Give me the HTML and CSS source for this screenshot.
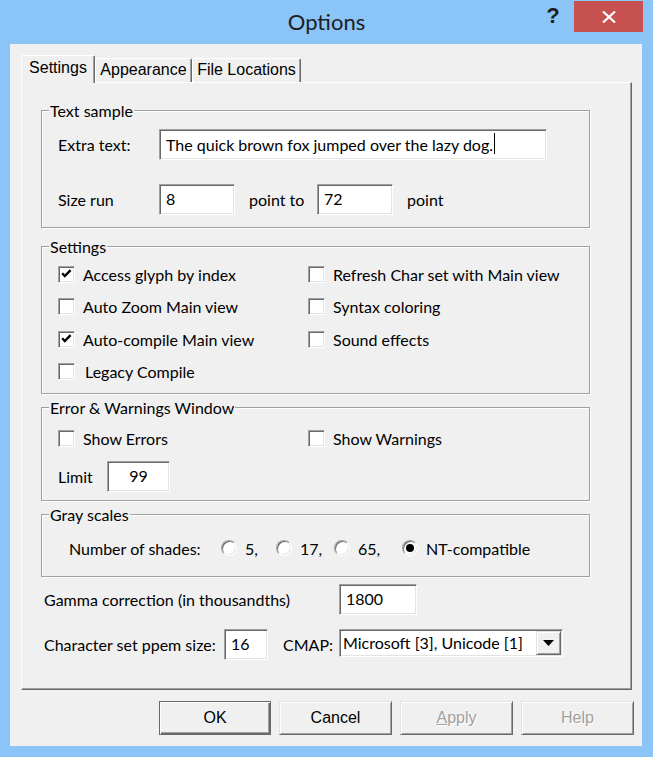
FILE: index.html
```html
<!DOCTYPE html>
<html lang="en">
<head>
<meta charset="utf-8">
<title>Options</title>
<link rel="stylesheet" href="styles.css">
</head>
<body>
<div class="window">
  <header class="titlebar">
    <div class="tb-spacer"></div>
    <div class="title">Options</div>
    <div class="tb-controls">
      <span class="help">?</span>
      <span class="close"><svg width="14" height="12" viewBox="0 0 14 12"><path d="M1 0.5 L13 11.5 M13 0.5 L1 11.5" stroke="#fff" stroke-width="2.2" fill="none"/></svg></span>
    </div>
  </header>
  <main class="client">
    <nav class="tabs">
      <div class="tab active tab-settings">Settings</div>
      <div class="tab tab-appearance">Appearance</div>
      <div class="tab tab-files">File Locations</div>
    </nav>
    <section class="panel">
      <fieldset class="group group-text">
        <legend>Text sample</legend>
        <div class="gbody gbody-text">
          <div class="row">
            <span class="lbl lbl-wide">Extra text:</span>
            <span class="edit edit-long">The quick brown fox jumped over the lazy dog.<span class="caret"></span></span>
          </div>
          <div class="row row-size">
            <span class="lbl lbl-wide">Size run</span>
            <span class="edit edit-size">8</span>
            <span class="unit unit-to">point to</span>
            <span class="edit edit-size">72</span>
            <span class="unit unit-end">point</span>
          </div>
        </div>
      </fieldset>

      <fieldset class="group group-settings">
        <legend>Settings</legend>
        <div class="gbody gbody-settings checks">
          <div class="check"><span class="cb"><svg width="15" height="15" viewBox="0 0 15 15"><path d="M3.2 6.2 L5.8 9 L11.6 3.2" fill="none" stroke="#000" stroke-width="2.4"/></svg></span><span>Access glyph by index</span></div>
          <div class="check"><span class="cb"></span><span>Refresh Char set with Main view</span></div>
          <div class="check"><span class="cb"></span><span>Auto Zoom Main view</span></div>
          <div class="check"><span class="cb"></span><span>Syntax coloring</span></div>
          <div class="check"><span class="cb"><svg width="15" height="15" viewBox="0 0 15 15"><path d="M3.2 6.2 L5.8 9 L11.6 3.2" fill="none" stroke="#000" stroke-width="2.4"/></svg></span><span>Auto-compile Main view</span></div>
          <div class="check"><span class="cb"></span><span>Sound effects</span></div>
          <div class="check"><span class="cb"></span><span class="legacy">Legacy Compile</span></div>
        </div>
      </fieldset>

      <fieldset class="group group-error">
        <legend>Error &amp; Warnings Window</legend>
        <div class="gbody gbody-error">
          <div class="checks">
            <div class="check"><span class="cb"></span><span>Show Errors</span></div>
            <div class="check"><span class="cb"></span><span>Show Warnings</span></div>
          </div>
          <div class="row row-limit">
            <span class="lbl lbl-limit">Limit</span>
            <span class="edit edit-limit">99</span>
          </div>
        </div>
      </fieldset>

      <fieldset class="group group-gray">
        <legend>Gray scales</legend>
        <div class="gbody gbody-gray">
          <div class="row row-shades">
            <span class="lbl lbl-shades">Number of shades:</span>
            <span class="radio-item ri-1"><span class="rb"></span><span>5,</span></span>
            <span class="radio-item ri-2"><span class="rb"></span><span>17,</span></span>
            <span class="radio-item ri-3"><span class="rb"></span><span>65,</span></span>
            <span class="radio-item"><span class="rb on"></span><span>NT-compatible</span></span>
          </div>
        </div>
      </fieldset>

      <div class="frow frow-gamma">
        <span class="lbl lbl-gamma">Gamma correction (in thousandths)</span>
        <span class="edit edit-gamma">1800</span>
      </div>
      <div class="frow frow-char">
        <span class="lbl lbl-char">Character set ppem size:</span>
        <span class="edit edit-ppem">16</span>
        <span class="unit unit-cmap">CMAP:</span>
        <span class="combo">
          <span class="combo-text">Microsoft [3], Unicode [1]</span>
          <span class="drop"><svg width="11" height="6" viewBox="0 0 11 6"><path d="M0 0 H11 L5.5 6 Z" fill="#000"/></svg></span>
        </span>
      </div>
    </section>
    <footer class="buttons">
      <button class="btn default">OK</button>
      <button class="btn">Cancel</button>
      <button class="btn disabled"><u>A</u>pply</button>
      <button class="btn disabled">Help</button>
    </footer>
  </main>
</div>
</body>
</html>
```
FILE: styles.css
```css
* { box-sizing: border-box; }
html, body { margin: 0; padding: 0; }
body {
  width: 653px;
  height: 757px;
  overflow: hidden;
  background: #8bc4f6;
  font-family: Lato, "Segoe UI", "Noto Sans", sans-serif;
  font-size: 16px;
  color: #000;
}
.window {
  width: 653px;
  height: 757px;
  display: flex;
  flex-direction: column;
}

/* title bar */
.titlebar {
  height: 44px;
  flex: 0 0 44px;
  display: grid;
  grid-template-columns: 1fr auto 1fr;
}
.title {
  font-size: 22px;
  line-height: 44px;
  color: #1e1e1e;
}
.tb-controls {
  display: flex;
  justify-content: flex-end;
  align-items: flex-start;
}
.help {
  width: 26px;
  margin-top: 5px;
  margin-right: 8px;
  text-align: center;
  font: bold 22px/22px "Liberation Sans", Arial, sans-serif;
  color: #1e1e1e;
}
.close {
  width: 69px;
  height: 31px;
  margin-top: 1px;
  margin-right: 10px;
  background: #c75050;
  display: flex;
  align-items: center;
  justify-content: center;
}

/* client */
.client {
  flex: 1;
  margin: 0 11px 11px 10px;
  background: #f0f0f0;
  padding: 11px 10px 11px 11px;
  display: flex;
  flex-direction: column;
}

/* tabs */
.tabs {
  height: 27px;
  display: flex;
  align-items: flex-end;
  position: relative;
  z-index: 1;
}
.tab {
  height: 24px;
  border: 1px solid #fff;
  border-bottom: 0;
  border-right-color: #696969;
  border-radius: 2px 2px 0 0;
  box-shadow: inset -1px 0 0 #a0a0a0;
  background: #f0f0f0;
  font: 16px/18px "Liberation Sans", Arial, sans-serif;
  padding-top: 2px;
  text-align: center;
  white-space: nowrap;
}
.tab.active {
  height: 28px;
  margin-bottom: -1px;
  padding-top: 3px;
}
.tab-settings { width: 74px; }
.tab-appearance { width: 97px; }
.tab-files { width: 109px; }

/* panel */
.panel {
  height: 608px;
  border: 1px solid;
  border-color: #fff #696969 #696969 #fff;
  box-shadow: inset -1px -1px 0 #a0a0a0;
}

/* group boxes */
.group {
  margin: 0 0 0 19px;
  width: 549px;
  min-width: 0;
  padding: 0;
  border: 1px solid #a0a0a0;
  box-shadow: 1px 1px 0 #fff, inset 1px 1px 0 #fff;
}
.group legend {
  margin-left: 7px;
  padding: 0 1px;
  line-height: 21px;
  background: #f0f0f0;
}
.group-text { margin-top: 17px; }
.group-settings { margin-top: 8px; }
.group-error { margin-top: 3px; }
.group-gray { margin-top: 3px; }

.gbody-text { padding: 8px 0 12px 16px; }
.gbody-settings { padding: 1px 0 5px 16px; }
.gbody-error { padding: 4px 0 8px 16px; }
.gbody-gray { padding: 8px 0 13px 27px; }

.row {
  display: flex;
  align-items: center;
  height: 31px;
  white-space: nowrap;
}
.row-size { margin-top: 24px; }
.row-limit { margin-top: 6.5px; }
.row-shades { height: 30px; }

.lbl { flex: 0 0 auto; white-space: nowrap; }
.lbl-wide { width: 101px; }
.lbl-limit { width: 49px; }
.lbl-shades { width: 152px; }
.lbl-gamma { width: 295px; }
.lbl-char { width: 180px; }

.unit { white-space: nowrap; }
.unit-to { width: 82px; padding-left: 14px; }
.unit-end { margin-left: 14px; }
.unit-cmap { width: 71px; padding-left: 15px; }

/* edits */
.edit {
  display: block;
  flex: 0 0 auto;
  height: 31px;
  border: 1px solid;
  border-color: #a0a0a0 #fff #fff #a0a0a0;
  box-shadow: inset 1px 1px 0 #696969, inset -1px -1px 0 #e3e3e3;
  background: #fff;
  padding: 3px 0 0 6px;
  line-height: 21px;
  white-space: nowrap;
  overflow: hidden;
}
.edit-long { width: 388px; }
.edit-size { width: 76px; }
.edit-limit { width: 63px; padding-left: 0; text-align: center; }
.edit-gamma { width: 78px; }
.edit-ppem { width: 44px; }
.caret {
  display: inline-block;
  width: 1px;
  height: 21px;
  margin-left: 1px;
  background: #000;
  vertical-align: -3px;
}

/* checkboxes */
.checks {
  display: grid;
  grid-template-columns: 250px 1fr;
  grid-auto-rows: 32.5px;
}
.check {
  display: flex;
  align-items: center;
  gap: 8px;
  white-space: nowrap;
}
.cb {
  flex: 0 0 17px;
  width: 17px;
  height: 17px;
  border: 1px solid;
  border-color: #a0a0a0 #fff #fff #a0a0a0;
  box-shadow: inset 1px 1px 0 #696969, inset -1px -1px 0 #e3e3e3;
  background: #fff;
}
.cb svg { display: block; }
.legacy { margin-left: 2px; }

/* radios */
.radio-item {
  display: flex;
  align-items: center;
  gap: 8px;
  white-space: nowrap;
}
.ri-1 { width: 55px; }
.ri-2 { width: 58px; }
.ri-3 { width: 68px; }
.rb {
  flex: 0 0 16px;
  width: 16px;
  height: 16px;
  border-radius: 50%;
  border: 1px solid;
  border-color: #a0a0a0 #fff #fff #a0a0a0;
  box-shadow: inset 1px 1px 0 #696969, inset -1px -1px 0 #e3e3e3;
  background: #fff;
  display: flex;
  align-items: center;
  justify-content: center;
}
.rb.on::after {
  content: "";
  width: 8px;
  height: 8px;
  border-radius: 50%;
  background: #000;
}

/* bottom form rows */
.frow {
  display: flex;
  align-items: center;
  height: 31px;
  margin-left: 22px;
}
.frow-gamma { margin-top: 7px; }
.frow-char { margin-top: 14px; }

.combo {
  align-self: flex-start;
  width: 224px;
  height: 28px;
  border: 1px solid;
  border-color: #a0a0a0 #fff #fff #a0a0a0;
  box-shadow: inset 1px 1px 0 #696969, inset -1px -1px 0 #e3e3e3;
  background: #fff;
  padding: 1px;
  display: flex;
}
.combo-text {
  flex: 1;
  line-height: 24px;
  padding-left: 2px;
  white-space: nowrap;
}
.drop {
  width: 25px;
  height: 24px;
  border: 1px solid;
  border-color: #e3e3e3 #696969 #696969 #e3e3e3;
  box-shadow: inset 1px 1px 0 #fff, inset -1px -1px 0 #a0a0a0;
  background: #f0f0f0;
  display: flex;
  align-items: center;
  justify-content: center;
}

/* buttons */
.buttons {
  display: flex;
  justify-content: flex-end;
  gap: 8px;
  margin-top: 11px;
  margin-right: -2px;
}
.btn {
  width: 113px;
  height: 34px;
  margin: 0;
  padding: 0;
  border: 1px solid;
  border-color: #e3e3e3 #696969 #696969 #e3e3e3;
  box-shadow: inset 1px 1px 0 #fff, inset -1px -1px 0 #a0a0a0;
  background: #f0f0f0;
  font: 16px/18px "Liberation Sans", Arial, sans-serif;
  color: #000;
}
.btn.default {
  width: 112px;
  border-color: #696969;
  box-shadow: inset 1px 1px 0 #fff, inset -1px -1px 0 #696969, inset -2px -2px 0 #a0a0a0;
}
.btn.disabled {
  color: #a0a0a0;
  text-shadow: 1px 1px 0 #fff;
}
```
